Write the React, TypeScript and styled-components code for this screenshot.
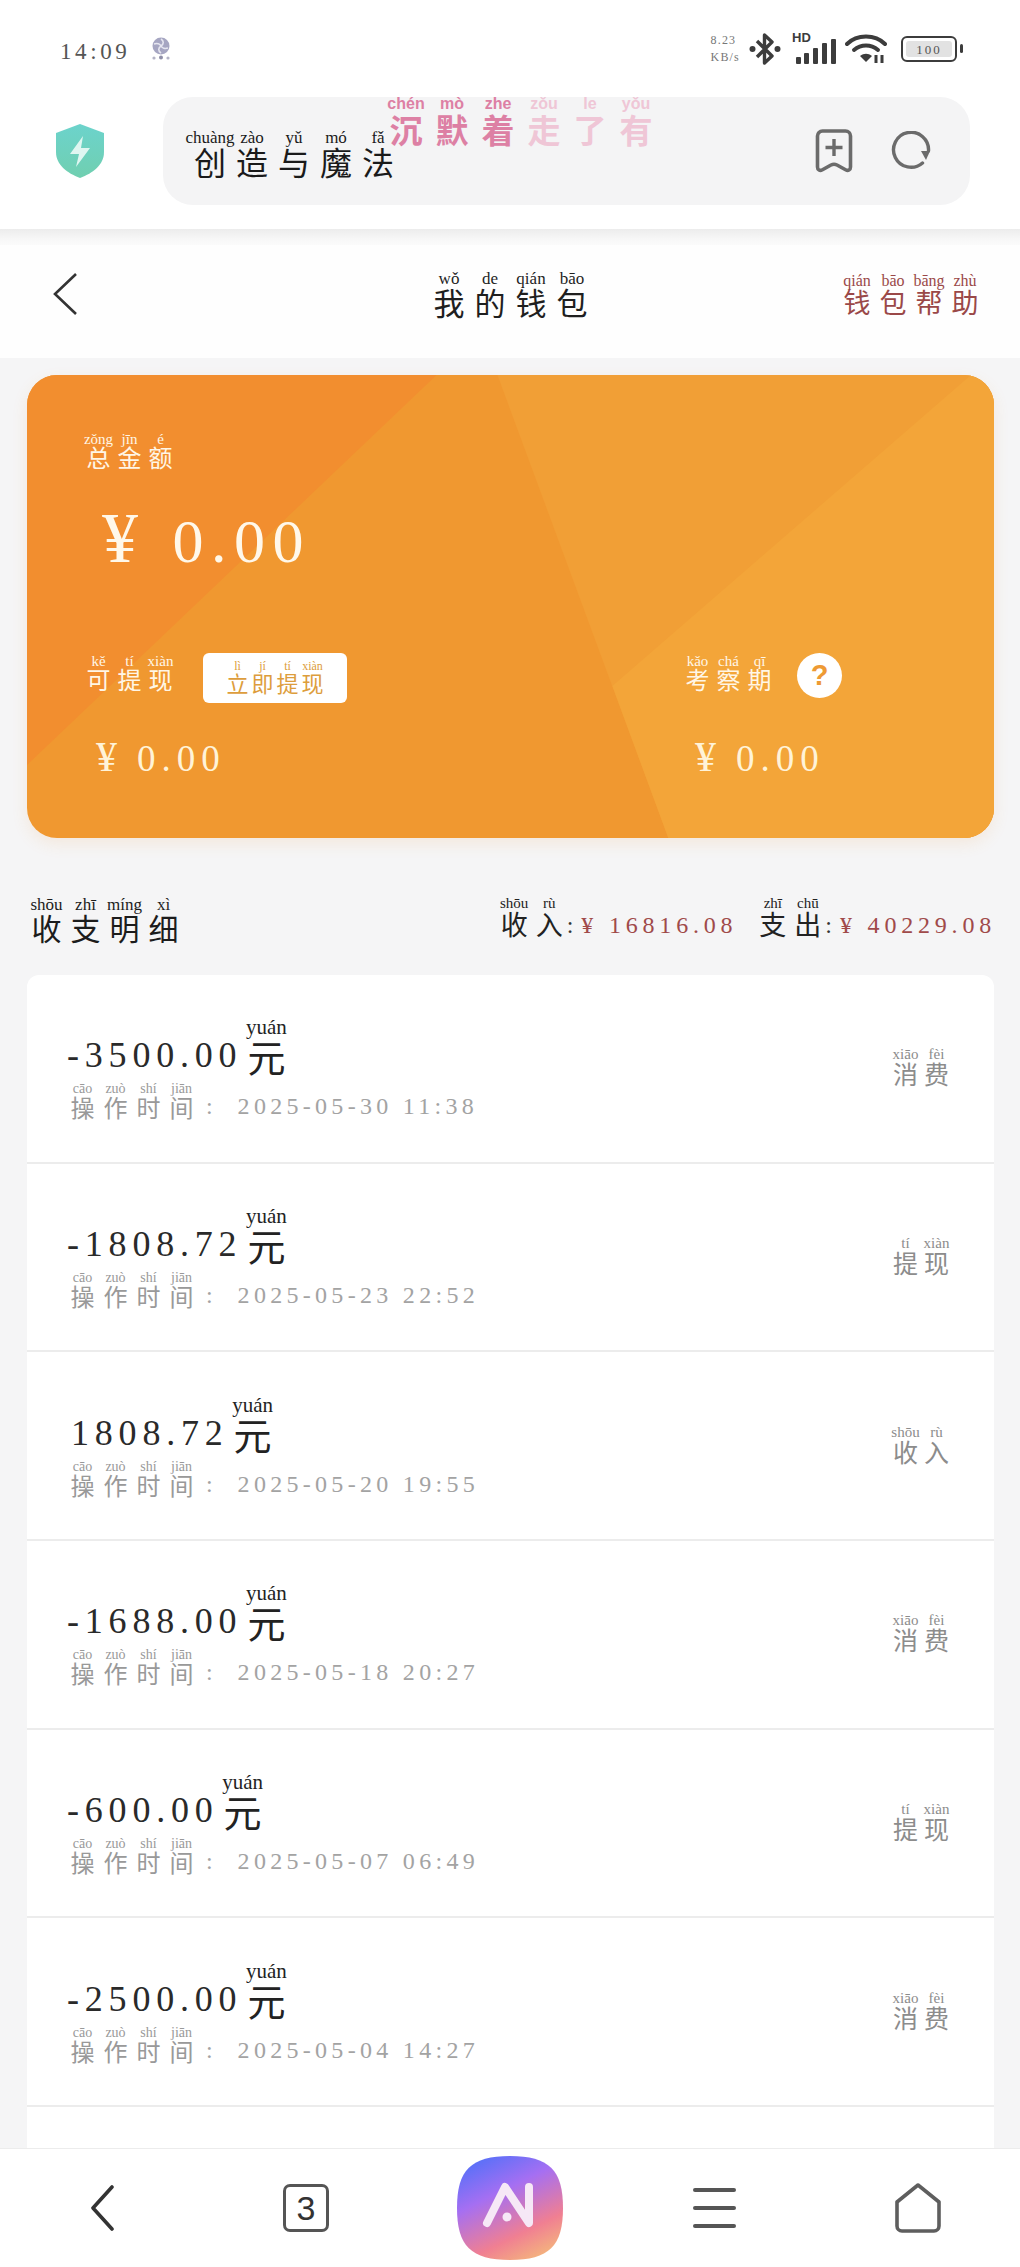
import React, { FC } from "react";
import styled, { createGlobalStyle } from "styled-components";

const GlobalStyle = createGlobalStyle`
  html, body {
    margin: 0;
    padding: 0;
    background: #f5f5f6;
  }
  #root {
    font-family: "Noto Sans CJK SC", "Liberation Serif", serif;
  }
`;

const SERIF = `"Liberation Serif", "Noto Sans CJK SC", serif`;

type PinyinProps = {
  text: string;
  pinyin: string;
  size: number;
  pitch: number;
  rtSize: number;
  rtGap?: number;
  color: string;
  rtColor?: string;
  weight?: number;
};

// one ruby cell per character, the pitch is what makes the wide spacing
const Pinyin: FC<PinyinProps> = ({ text, pinyin, size, pitch, rtSize, rtGap = 0, color, rtColor, weight }) => {
  const sounds = pinyin.split(" ");
  return (
    <Word>
      {Array.from(text).map((ch, i) => (
        <Cell key={i} $pitch={pitch}>
          <Sound $size={rtSize} $gap={rtGap} $color={rtColor || color} $weight={weight}>
            {sounds[i]}
          </Sound>
          <Han $size={size} $color={color} $weight={weight}>
            {ch}
          </Han>
        </Cell>
      ))}
    </Word>
  );
};

const records = [
  { amount: "-3500.00", time: "2025-05-30 11:38", type: "消费", typePy: "xiāo fèi" },
  { amount: "-1808.72", time: "2025-05-23 22:52", type: "提现", typePy: "tí xiàn" },
  { amount: "1808.72", time: "2025-05-20 19:55", type: "收入", typePy: "shōu rù" },
  { amount: "-1688.00", time: "2025-05-18 20:27", type: "消费", typePy: "xiāo fèi" },
  { amount: "-600.00", time: "2025-05-07 06:49", type: "提现", typePy: "tí xiàn" },
  { amount: "-2500.00", time: "2025-05-04 14:27", type: "消费", typePy: "xiāo fèi" },
];

const App: FC = () => (
  <Page>
    <GlobalStyle />
    <Header>
      <StatusBar>
        <StatusLeft>
          <Clock>14:09</Clock>
          <svg width="20" height="23" viewBox="0 0 20 23">
            <circle cx="10" cy="9" r="8.5" fill="#a6a6c2" />
            <path d="M10 2c3 2 3 5 0 7-3 2-3 5 0 7M3 7c3-1 6 0 7 2s4 3 7 2" fill="none" stroke="#e6e6f0" strokeWidth="1.6" />
            <circle cx="3" cy="21" r="1.6" fill="#b4b4c6" />
            <circle cx="10" cy="20.5" r="2" fill="#8f8fa8" />
            <circle cx="17" cy="21" r="1.6" fill="#b4b4c6" />
          </svg>
        </StatusLeft>
        <StatusRight>
          <Speed>
            <span>8.23</span>
            <span>KB/s</span>
          </Speed>
          <svg width="32" height="34" viewBox="0 0 32 34">
            <path d="M8 9l15 15-7.5 7V3L23 10 8 25" fill="none" stroke="#3c3c3c" strokeWidth="3.4" strokeLinejoin="round" />
            <circle cx="3.5" cy="17" r="3" fill="#3c3c3c" />
            <circle cx="28.5" cy="17" r="3" fill="#3c3c3c" />
          </svg>
          <SignalBox>
            <HdMark>HD</HdMark>
            <svg width="40" height="26" viewBox="0 0 40 26">
              <rect x="0" y="18" width="5" height="7" rx="1" fill="#3c3c3c" />
              <rect x="8" y="14" width="5" height="11" rx="1" fill="#3c3c3c" />
              <rect x="17" y="9" width="5" height="16" rx="1" fill="#3c3c3c" />
              <rect x="26" y="4" width="5" height="21" rx="1" fill="#3c3c3c" />
              <rect x="35" y="0" width="5" height="25" rx="1" fill="#3c3c3c" />
            </svg>
          </SignalBox>
          <svg width="42" height="30" viewBox="0 0 42 30">
            <path d="M2 10C12 0 30 0 40 10" fill="none" stroke="#3c3c3c" strokeWidth="4" strokeLinecap="round" />
            <path d="M9 16c7-6 17-6 24 0" fill="none" stroke="#3c3c3c" strokeWidth="4" strokeLinecap="round" />
            <path d="M15 22c4-3 8-3 12 0l-6 6z" fill="#3c3c3c" />
            <path d="M31 21v8M37 21v8" stroke="#3c3c3c" strokeWidth="3" />
          </svg>
          <Battery>
            <BatteryFill>100</BatteryFill>
            <BatteryCap />
          </Battery>
        </StatusRight>
      </StatusBar>
      <BrowserBar>
        <svg width="48" height="54" viewBox="0 0 48 54">
          <defs>
            <linearGradient id="shield" x1="0" y1="0" x2="0" y2="1">
              <stop offset="0" stopColor="#6cd3cc" />
              <stop offset="1" stopColor="#70cfb0" />
            </linearGradient>
          </defs>
          <path d="M24 0l24 9v19c0 13-11 21-24 26C11 49 0 41 0 28V9z" fill="url(#shield)" />
          <path d="M27 12L14 30h9l-3 13 14-19h-9z" fill="#dff6f1" />
        </svg>
        <AddressPill>
          <Pinyin text="创造与魔法" pinyin="chuàng zào yǔ mó fǎ" size={32} pitch={42} rtSize={17} rtGap={-1} color="#1a1a1a" />
          <PillActions>
            <svg width="38" height="44" viewBox="0 0 38 44">
              <path
                d="M2.5 7a5 5 0 0 1 5-5h23a5 5 0 0 1 5 5v31c0 3-2.500 4-4.500 3l-9-5c-2-1-4-1-6 0l-9 5c-2 1-4.500 0-4.500-3z"
                fill="none"
                stroke="#6b6b6b"
                strokeWidth="3.6"
                strokeLinejoin="round"
              />
              <path d="M19 10v17M10.500 18.500h17" stroke="#6b6b6b" strokeWidth="3.4" />
            </svg>
            <svg width="40" height="40" viewBox="0 0 40 40">
              <path d="M31.500 32A17.500 17.500 0 1 1 37.500 20" fill="none" stroke="#6b6b6b" strokeWidth="3.4" strokeLinecap="round" />
              <path d="M30 20h9l-4 9z" fill="#6b6b6b" />
            </svg>
          </PillActions>
          <Marquee>
            <Pinyin text="沉默着" pinyin="chén mò zhe" size={33} pitch={46} rtSize={16} rtGap={1} color="#dd80a4" weight={700} />
            <Pinyin text="走了有" pinyin="zǒu le yǒu" size={33} pitch={46} rtSize={16} rtGap={1} color="#efc6d6" weight={700} />
          </Marquee>
        </AddressPill>
      </BrowserBar>
    </Header>
    <HeaderGap />
    <NavBar>
      <NavBack width="24" height="42" viewBox="0 0 24 42">
        <path d="M23 1L2 21l21 20" fill="none" stroke="#333" strokeWidth="2.6" />
      </NavBack>
      <NavTitle>
        <Pinyin text="我的钱包" pinyin="wǒ de qián bāo" size={31} pitch={41} rtSize={17} rtGap={-1} color="#1f1f1f" />
      </NavTitle>
      <NavHelp>
        <Pinyin text="钱包帮助" pinyin="qián bāo bāng zhù" size={27} pitch={36} rtSize={16} rtGap={-1} color="#9a4848" />
      </NavHelp>
    </NavBar>
    <Main>
      <WalletCard>
        <CardFacets viewBox="0 0 968 463" preserveAspectRatio="none">
          <polygon points="0,0 410,0 0,390" fill="#f28e2f" />
          <polygon points="471,0 968,0 968,463 642,463" fill="#f19f36" />
          <polygon points="945,0 968,0 968,463 642,463 586,311" fill="#f3a539" />
        </CardFacets>
        <CardBody>
          <Pinyin text="总金额" pinyin="zǒng jīn é" size={24} pitch={31} rtSize={15} rtGap={-2} color="#fff6e6" />
          <TotalAmount>
            <TotalYen>¥</TotalYen>0.00
          </TotalAmount>
          <CardColumns>
            <CardColumn>
              <ColumnHead>
                <LabelSlot>
                  <Pinyin text="可提现" pinyin="kě tí xiàn" size={24} pitch={31} rtSize={15} rtGap={-2} color="#fff6e6" />
                </LabelSlot>
                <WithdrawButton>
                  <Pinyin text="立即提现" pinyin="lì jí tí xiàn" size={22} pitch={25} rtSize={12} rtGap={-1} color="#dd9d3c" />
                </WithdrawButton>
              </ColumnHead>
              <SubAmount><SubYen>¥</SubYen>0.00</SubAmount>
            </CardColumn>
            <CardColumn>
              <ColumnHead>
                <LabelSlot>
                  <Pinyin text="考察期" pinyin="kǎo chá qī" size={24} pitch={31} rtSize={15} rtGap={-2} color="#fff6e6" />
                </LabelSlot>
                <HelpDot>?</HelpDot>
              </ColumnHead>
              <SubAmount><SubYen>¥</SubYen>0.00</SubAmount>
            </CardColumn>
          </CardColumns>
        </CardBody>
      </WalletCard>
      <SummaryRow>
        <Pinyin text="收支明细" pinyin="shōu zhī míng xì" size={30} pitch={39} rtSize={17} rtGap={-1} color="#1c1c1c" />
        <Totals>
          <TotalItem>
            <Pinyin text="收入" pinyin="shōu rù" size={27} pitch={35} rtSize={15} rtGap={-1} color="#222" />
            <Colon>:</Colon>
            <Money>¥ 16816.08</Money>
          </TotalItem>
          <TotalItem>
            <Pinyin text="支出" pinyin="zhī chū" size={27} pitch={35} rtSize={15} rtGap={-1} color="#222" />
            <Colon>:</Colon>
            <Money>¥ 40229.08</Money>
          </TotalItem>
        </Totals>
      </SummaryRow>
      <RecordList>
        {records.map((r) => (
          <RecordRow key={r.time}>
            <div>
              <AmountLine>
                <AmountValue $income={!r.amount.startsWith("-")}>{r.amount}</AmountValue>
                <Pinyin text="元" pinyin="yuán" size={38} pitch={44} rtSize={21} rtGap={-1} color="#222" />
              </AmountLine>
              <TimeLine>
                <Pinyin text="操作时间" pinyin="cāo zuò shí jiān" size={24} pitch={33} rtSize={14} rtGap={-1} color="#999" />
                <TimeValue>:&nbsp;&nbsp;{r.time}</TimeValue>
              </TimeLine>
            </div>
            <TypeLabel>
              <Pinyin text={r.type} pinyin={r.typePy} size={25} pitch={31} rtSize={15} rtGap={-1} color="#8c8c8c" />
            </TypeLabel>
          </RecordRow>
        ))}
        <RecordRow />
      </RecordList>
    </Main>
    <BottomBar>
      <BottomSlot>
        <svg width="26" height="46" viewBox="0 0 26 46">
          <path d="M23 2L4 23l19 21" fill="none" stroke="#333" strokeWidth="3.6" strokeLinecap="round" strokeLinejoin="round" />
        </svg>
      </BottomSlot>
      <BottomSlot>
        <TabCount>3</TabCount>
      </BottomSlot>
      <BottomSlot>
        <svg width="106" height="104" viewBox="0 0 106 104">
          <defs>
            <linearGradient id="logo" x1="0.22" y1="0" x2="0.72" y2="1">
              <stop offset="0.03" stopColor="#5c70f8" />
              <stop offset="0.35" stopColor="#a56ff2" />
              <stop offset="0.75" stopColor="#f07f92" />
              <stop offset="1" stopColor="#f4b27e" />
            </linearGradient>
          </defs>
          <path d="M53 0C92 0 106 14 106 52S92 104 53 104 0 90 0 52 14 0 53 0Z" fill="url(#logo)" />
          <path d="M30 67L48 31l24 36V31" fill="none" stroke="#f6e8f6" strokeWidth="8" strokeLinecap="round" strokeLinejoin="round" />
          <circle cx="50" cy="61" r="4.500" fill="#f6e8f6" />
        </svg>
      </BottomSlot>
      <BottomSlot>
        <MenuLines>
          <span />
          <span />
          <span />
        </MenuLines>
      </BottomSlot>
      <BottomSlot>
        <svg width="48" height="50" viewBox="0 0 48 50">
          <path d="M24 2L45 19v24a5 5 0 0 1-5 5H8a5 5 0 0 1-5-5V19z" fill="none" stroke="#5e5e5e" strokeWidth="3.6" strokeLinejoin="round" />
        </svg>
      </BottomSlot>
    </BottomBar>
  </Page>
);

export default App;

const Word = styled.span`
  display: inline-flex;
  align-items: flex-end;
  vertical-align: top;
`;

const Cell = styled.ruby<{ $pitch: number }>`
  display: inline-flex;
  flex-direction: column;
  align-items: center;
  width: ${(p) => p.$pitch}px;
`;

const Sound = styled.span<{ $size: number; $gap: number; $color: string; $weight?: number }>`
  display: block;
  font-family: ${(p) => (p.$weight ? `"Liberation Sans", sans-serif` : SERIF)};
  font-size: ${(p) => p.$size}px;
  font-weight: ${(p) => p.$weight || 400};
  line-height: 1;
  margin-bottom: ${(p) => p.$gap}px;
  color: ${(p) => p.$color};
  white-space: nowrap;
`;

const Han = styled.span<{ $size: number; $color: string; $weight?: number }>`
  display: block;
  font-family: "Noto Sans CJK SC", sans-serif;
  font-size: ${(p) => p.$size}px;
  font-weight: ${(p) => p.$weight || 400};
  line-height: 1;
  color: ${(p) => p.$color};
`;

const Page = styled.div`
  display: flex;
  flex-direction: column;
  width: 1020px;
  height: 2267px;
  overflow: hidden;
  background: #f5f5f6;
`;

const Header = styled.header`
  background: #fff;
  height: 229px;
  flex-shrink: 0;
`;

const StatusBar = styled.div`
  display: flex;
  align-items: center;
  justify-content: space-between;
  height: 93px;
  padding: 4px 63px 0 60px;
  box-sizing: border-box;
`;

const StatusLeft = styled.div`
  display: flex;
  align-items: center;
  gap: 21px;
`;

const Clock = styled.span`
  font-family: ${SERIF};
  font-size: 23px;
  letter-spacing: 3.6px;
  color: #555;
  padding-top: 6px;
`;

const StatusRight = styled.div`
  display: flex;
  align-items: center;
  gap: 9px;
`;

const Speed = styled.div`
  display: flex;
  flex-direction: column;
  gap: 5px;
  font-family: ${SERIF};
  font-size: 12px;
  line-height: 1;
  letter-spacing: 1.2px;
  color: #777;
`;

const SignalBox = styled.div`
  position: relative;
  margin: 6px 0 0 6px;
  line-height: 0;
`;

const HdMark = styled.span`
  position: absolute;
  left: -4px;
  top: -8px;
  font-family: "Liberation Sans", sans-serif;
  font-weight: 700;
  font-size: 13px;
  line-height: 1;
  color: #3c3c3c;
`;

const Battery = styled.div`
  position: relative;
  width: 56px;
  height: 26px;
  margin-left: 5px;
  padding: 3px;
  box-sizing: border-box;
  border: 2.5px solid #3c3c3c;
  border-radius: 6px;
`;

const BatteryFill = styled.div`
  height: 100%;
  background: #e2e2e2;
  border-radius: 3px;
  font-family: ${SERIF};
  font-size: 13px;
  line-height: 18px;
  letter-spacing: 2px;
  text-align: center;
  color: #555;
`;

const BatteryCap = styled.i`
  position: absolute;
  right: -8px;
  top: 6px;
  width: 3px;
  height: 9px;
  border-radius: 2px;
  background: #3c3c3c;
`;

const BrowserBar = styled.div`
  display: flex;
  align-items: flex-start;
  padding: 4px 50px 0 56px;
  gap: 59px;

  > svg {
    margin-top: 27px;
  }
`;

const AddressPill = styled.div`
  position: relative;
  flex: 1;
  display: flex;
  align-items: flex-end;
  justify-content: space-between;
  height: 108px;
  box-sizing: border-box;
  padding: 0 39px 28px 26px;
  background: #f4f4f5;
  border-radius: 30px;
`;

const PillActions = styled.div`
  display: flex;
  align-items: center;
  gap: 38px;
  margin-bottom: 4px;
`;

const Marquee = styled.div`
  position: absolute;
  left: 220px;
  top: -1px;
  display: flex;
`;

const HeaderGap = styled.div`
  height: 16px;
  flex-shrink: 0;
  background: linear-gradient(#ececec, #f8f8f8 70%, #fbfbfb);
`;

const NavBar = styled.nav`
  display: grid;
  grid-template-columns: 1fr auto 1fr;
  align-items: center;
  flex-shrink: 0;
  height: 113px;
  box-sizing: border-box;
  padding: 0 37px 16px 53px;
  background: #fefefe;
`;

const NavBack = styled.svg`
  display: block;
`;

const NavTitle = styled.div`
  display: flex;
  margin-left: -15px;
`;

const NavHelp = styled.div`
  display: flex;
  justify-content: flex-end;
`;

const Main = styled.main`
  flex: 1;
  min-height: 0;
  overflow: hidden;
  padding: 17px 26px 0 27px;
`;

const WalletCard = styled.section`
  position: relative;
  height: 463px;
  border-radius: 30px;
  overflow: hidden;
  background: #f09830;
  box-shadow: 0 6px 16px rgba(240, 150, 50, 0.12);
`;

const CardFacets = styled.svg`
  position: absolute;
  inset: 0;
  width: 100%;
  height: 100%;
`;

const CardBody = styled.div`
  position: relative;
  padding: 57px 0 0 56px;
`;

const TotalAmount = styled.div`
  display: flex;
  align-items: baseline;
  margin: 38px 0 0 19px;
  font-family: ${SERIF};
  font-size: 62px;
  line-height: 62px;
  letter-spacing: 7.5px;
  color: #fff8ea;
`;

const TotalYen = styled.span`
  font-size: 72px;
  margin-right: 27px;
`;

const CardColumns = styled.div`
  display: grid;
  grid-template-columns: 599px 1fr;
  margin-top: 81px;
`;

const CardColumn = styled.div`
  display: flex;
  flex-direction: column;
`;

const ColumnHead = styled.div`
  display: flex;
  align-items: flex-start;
  height: 52px;
  gap: 27px;
`;

const LabelSlot = styled.div`
  display: flex;
  margin-top: 1px;
`;

const WithdrawButton = styled.button`
  display: flex;
  align-items: center;
  justify-content: center;
  width: 144px;
  height: 50px;
  padding: 0 0 4px;
  border: 0;
  border-radius: 6px;
  background: #fff;
`;

const HelpDot = styled.span`
  display: flex;
  align-items: center;
  justify-content: center;
  width: 45px;
  height: 45px;
  margin-left: -5px;
  border-radius: 50%;
  background: #fff;
  font-family: "Liberation Sans", sans-serif;
  font-weight: 700;
  font-size: 29px;
  color: #ee9a34;
`;

const SubAmount = styled.div`
  display: flex;
  align-items: baseline;
  margin: 34px 0 0 13px;
  font-family: ${SERIF};
  font-size: 37px;
  line-height: 37px;
  letter-spacing: 6px;
  color: #fff3d8;
`;

const SubYen = styled.span`
  font-size: 42px;
  margin-right: 14px;
`;

const SummaryRow = styled.div`
  display: flex;
  align-items: flex-end;
  justify-content: space-between;
  height: 67px;
  margin-top: 37px;
`;

const Totals = styled.div`
  display: flex;
  gap: 18px;
  margin-right: -2px;
  padding-bottom: 5px;
`;

const TotalItem = styled.div`
  display: flex;
  align-items: flex-end;
`;

const Colon = styled.span`
  font-family: ${SERIF};
  font-size: 24px;
  line-height: 24px;
  color: #333;
  margin-right: 8px;
`;

const Money = styled.span`
  font-family: ${SERIF};
  font-size: 24px;
  line-height: 24px;
  letter-spacing: 4.8px;
  color: #a04a4a;
`;

const RecordList = styled.div`
  margin-top: 33px;
  border-radius: 12px 12px 0 0;
  overflow: hidden;
`;

const RecordRow = styled.div`
  display: flex;
  align-items: center;
  justify-content: space-between;
  height: 186.7px;
  padding: 0 42px 0 40px;
  background: #fff;
  border-bottom: 2px solid #ececec;
`;

const AmountLine = styled.div`
  display: flex;
  align-items: flex-end;
`;

const AmountValue = styled.span<{ $income: boolean }>`
  font-family: ${SERIF};
  font-size: 36px;
  line-height: 40px;
  letter-spacing: 5.8px;
  color: #2a2a2a;
  margin: 0 2px 0 ${(p) => (p.$income ? 4 : 0)}px;
`;

const TimeLine = styled.div`
  display: flex;
  align-items: flex-end;
  margin: 7px 0 0 -1px;
`;

const TimeValue = styled.span`
  font-family: ${SERIF};
  font-size: 24px;
  line-height: 26px;
  letter-spacing: 4.3px;
  color: #a3a3a3;
  margin-left: 8px;
`;

const TypeLabel = styled.div`
  display: flex;
  margin-bottom: 3px;
`;

const BottomBar = styled.footer`
  display: grid;
  grid-template-columns: repeat(5, 1fr);
  flex-shrink: 0;
  height: 119px;
  background: #fff;
  border-top: 1px solid #ececec;
  box-sizing: border-box;
`;

const BottomSlot = styled.div`
  display: flex;
  align-items: center;
  justify-content: center;
`;

const TabCount = styled.div`
  display: flex;
  align-items: center;
  justify-content: center;
  width: 46px;
  height: 48px;
  box-sizing: border-box;
  border: 3px solid #555;
  border-radius: 7px;
  font-family: "Liberation Sans", sans-serif;
  font-size: 34px;
  color: #333;
`;

const MenuLines = styled.div`
  display: flex;
  flex-direction: column;
  gap: 14px;

  span {
    display: block;
    width: 43px;
    height: 4px;
    background: #555;
    border-radius: 2px;
  }
`;
